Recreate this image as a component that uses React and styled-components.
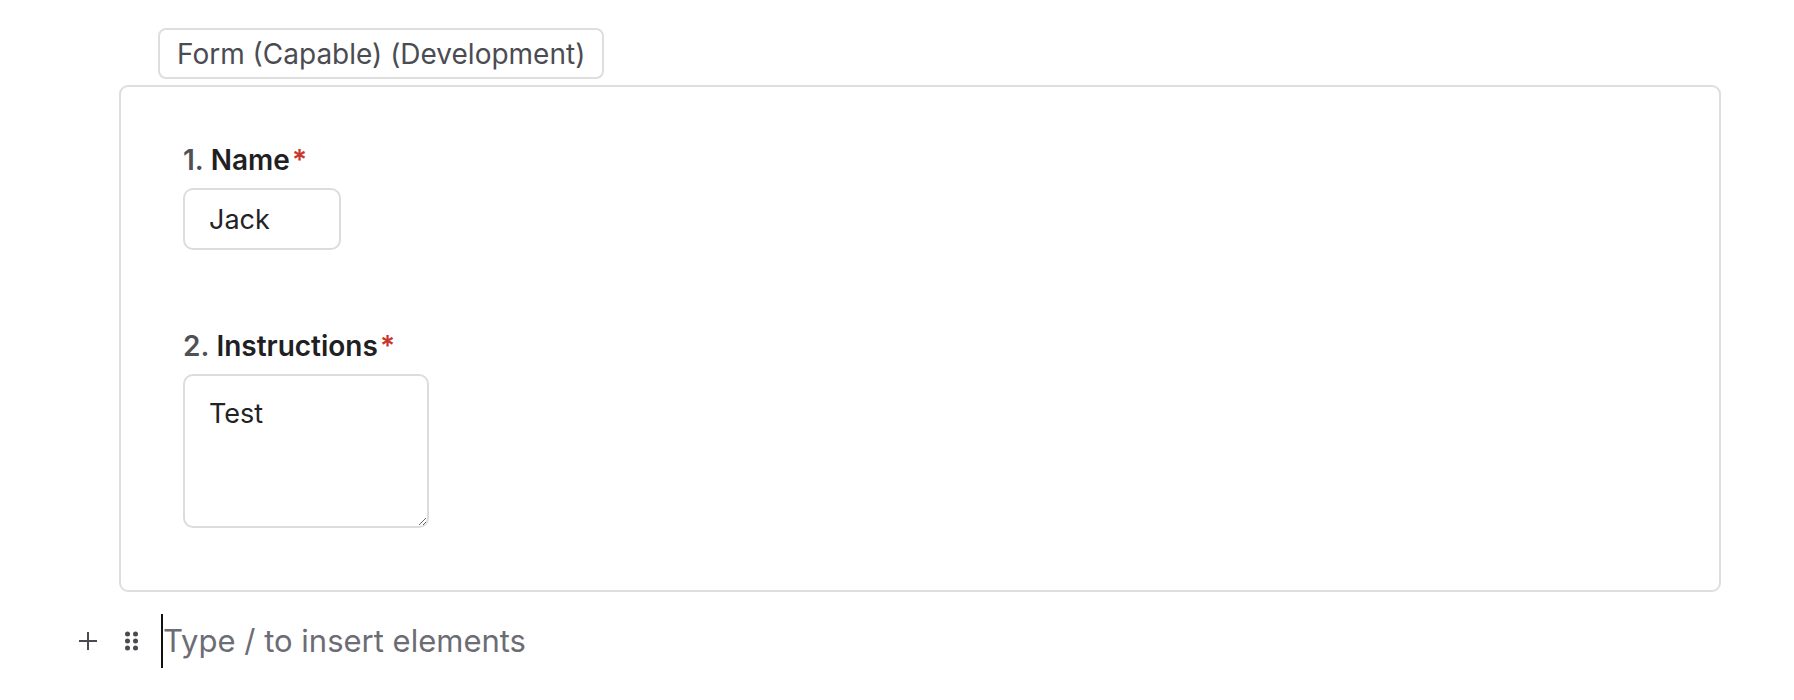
import { createGlobalStyle } from 'styled-components';
import styled from 'styled-components';

const GlobalStyle = createGlobalStyle`
  html, body {
    margin: 0;
    padding: 0;
    background: #fff;
  }
  body {
    font-family: Inter, 'Noto Sans', 'Liberation Sans', sans-serif;
    color: #222326;
  }
`;

const Page = styled.div`
  padding: 28px 73px 0 70px;
  display: flex;
  flex-direction: column;
`;

const Block = styled.div`
  margin-left: 49px;
  display: flex;
  flex-direction: column;
  align-items: flex-start;
  gap: 6px;
`;

const Tag = styled.div`
  margin-left: 39px;
  height: 51px;
  box-sizing: border-box;
  padding: 0 17px;
  display: flex;
  align-items: center;
  border: 2px solid #dedede;
  border-radius: 8px;
  font-size: 28px;
  color: #4b4c52;
  white-space: nowrap;
`;

const Card = styled.div`
  align-self: stretch;
  box-sizing: border-box;
  height: 507px;
  border: 2px solid #dedede;
  border-radius: 9px;
  padding: 53px 62px;
  display: flex;
  flex-direction: column;
  gap: 76px;
`;

const Field = styled.div`
  display: flex;
  flex-direction: column;
  align-items: flex-start;
  gap: 8px;
`;

const Label = styled.label`
  font-size: 28px;
  font-weight: 600;
  line-height: 40px;
  color: #1f2024;
  display: flex;
  align-items: baseline;
`;

const Num = styled.span`
  color: #505157;
  margin-right: 7px;
`;

const Star = styled.span`
  color: #c8372d;
  margin-left: 2px;
`;

const Input = styled.input`
  box-sizing: border-box;
  width: ${(p) => p.$w}px;
  height: 62px;
  border: 2px solid #dcdcdc;
  border-radius: 10px;
  padding: 0 24px;
  font-family: inherit;
  font-size: 27px;
  color: #222326;
  background: #fff;
  outline: none;
`;

const TextArea = styled.textarea`
  box-sizing: border-box;
  width: 246px;
  height: 154px;
  border: 2px solid #dcdcdc;
  border-radius: 10px;
  padding: 20px 24px;
  font-family: inherit;
  font-size: 27px;
  line-height: 36px;
  color: #222326;
  background: #fff;
  outline: none;
  resize: both;
`;

const Row = styled.div`
  margin-top: 22px;
  display: flex;
  align-items: center;
  height: 54px;
`;

const Gutter = styled.div`
  width: 91px;
  display: flex;
  align-items: center;
  gap: 27px;
  padding-left: 8px;
  box-sizing: border-box;
`;

const Caret = styled.span`
  width: 2px;
  height: 54px;
  background: #111;
`;

const Placeholder = styled.div`
  font-size: 31px;
  line-height: 54px;
  color: #6c6d74;
  white-space: nowrap;
`;

const PlusIcon = () => (
  <svg width="20" height="20" viewBox="0 0 20 20">
    <path d="M10 1v18M1 10h18" stroke="#4a4b50" strokeWidth="2" fill="none" />
  </svg>
);

const DragIcon = () => (
  <svg width="13" height="20" viewBox="0 0 13 20">
    {[3, 10, 17].map((y) =>
      [2.5, 10.5].map((x) => (
        <circle key={`${x}-${y}`} cx={x} cy={y} r="2.5" fill="#4a4b50" />
      ))
    )}
  </svg>
);

export default function App() {
  return (
    <>
      <GlobalStyle />
      <Page>
        <Block>
          <Tag>Form (Capable) (Development)</Tag>
          <Card>
            <Field>
              <Label>
                <Num>1.</Num>Name<Star>*</Star>
              </Label>
              <Input $w={158} defaultValue="Jack" />
            </Field>
            <Field>
              <Label>
                <Num>2.</Num>Instructions<Star>*</Star>
              </Label>
              <TextArea defaultValue="Test" />
            </Field>
          </Card>
        </Block>
        <Row>
          <Gutter>
            <PlusIcon />
            <DragIcon />
          </Gutter>
          <Caret />
          <Placeholder>Type / to insert elements</Placeholder>
        </Row>
      </Page>
    </>
  );
}
